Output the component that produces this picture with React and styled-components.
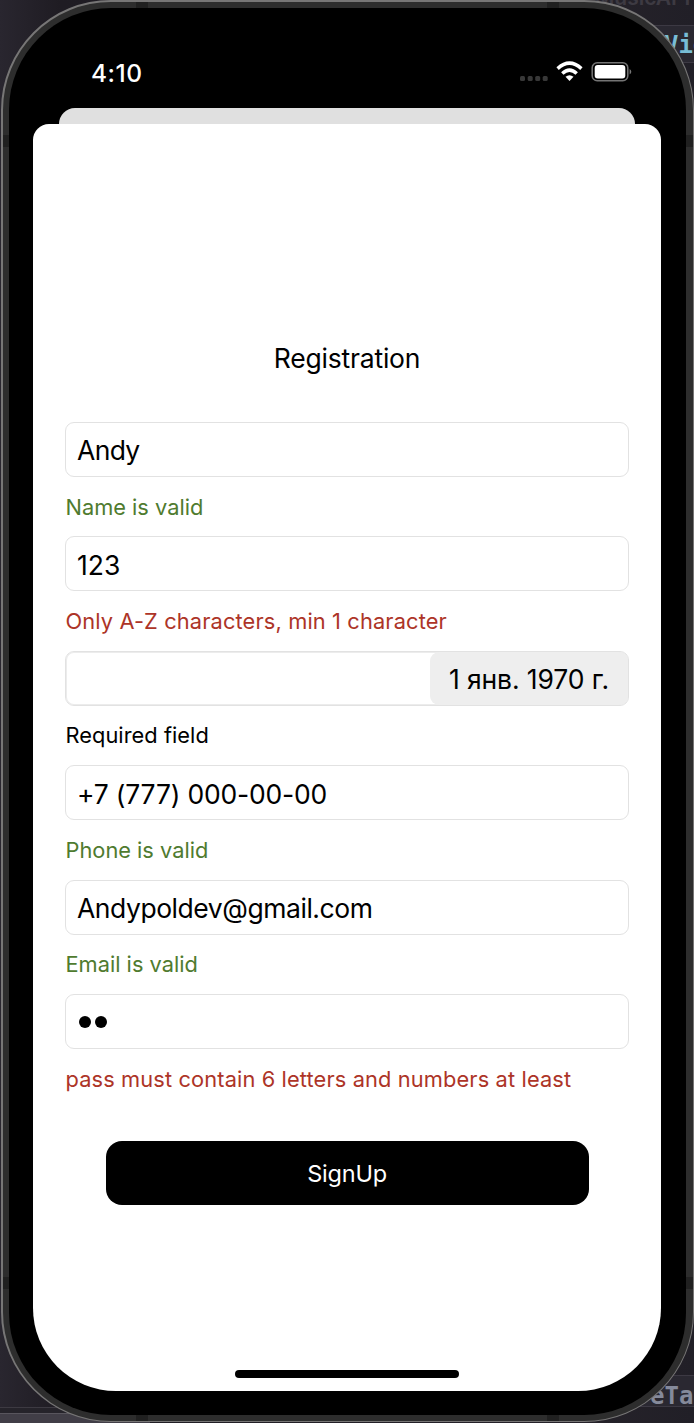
import React from 'react';
import styled, { createGlobalStyle } from 'styled-components';

const GlobalStyle = createGlobalStyle`
  * { box-sizing: border-box; }
  html, body { margin: 0; padding: 0; }
  body {
    background: #25222b;
    font-family: Inter, "Liberation Sans", sans-serif;
    overflow: hidden;
  }
`;

/* The editor and the simulator share one grid cell, simulator on top */
const Desktop = styled.main`
  display: grid;
  width: 694px;
  height: 1423px;
  overflow: hidden;
  > * { grid-area: 1 / 1; }
`;

const Editor = styled.div`
  display: flex;
  flex-direction: column;
  height: 1423px;
  background: linear-gradient(90deg, #29262f 0, #1f1c23 60px, #252229 600px, #211f27 100%);
`;

const EditorTitle = styled.div`
  height: 25px;
  padding-left: 595px;
  overflow: hidden;
  color: #3d3a42;
  font: 600 21px/24px Inter, sans-serif;
  span { display: block; margin-top: -14px; }
`;

const EditorGap = styled.div`
  flex: 1;
`;

const CodeRow = styled.div`
  display: flex;
  align-items: center;
  align-self: flex-end;
  width: 110px;
  height: ${(p) => p.$height}px;
  padding: ${(p) => p.$drop || 0}px 0 0 ${(p) => p.$indent}px;
  border: solid #3c3943;
  border-width: 1px 0;
  background: #2a2831;
  color: ${(p) => p.$color};
  font: bold 24px/28px "DejaVu Sans Mono", monospace;
  white-space: pre;
  overflow: hidden;
`;

const EditorFooter = styled.div`
  width: 150px;
  height: 16px;
  background: linear-gradient(#3d3a42 0 1px, #25232a 1px 6px, #58555d 6px 7px, #413e47 7px);
`;

const band = (place, size) => `linear-gradient(#202020, #202020) ${place} / ${size} no-repeat`;

/* Metal frame: the darker bands are the antenna breaks */
const Phone = styled.section`
  width: 693px;
  height: 1422px;
  margin-left: 1px;
  padding: 6px;
  border: 2px solid #777676;
  border-right-width: 1px;
  border-bottom-width: 1px;
  border-radius: 110px;
  background:
    ${band('133px 0', '12px 6px')},
    ${band('544px 0', '12px 6px')},
    ${band('133px 100%', '12px 6px')},
    ${band('544px 100%', '12px 6px')},
    ${band('0 133px', '6px 12px')},
    ${band('0 1275px', '6px 12px')},
    ${band('100% 133px', '7px 12px')},
    ${band('100% 1275px', '7px 12px')},
    #2d2d2d;
`;

const Bezel = styled.div`
  display: flex;
  flex-direction: column;
  width: 677px;
  height: 100%;
  padding: 0 25px 24px 24px;
  border-radius: 102px;
  background: #000;
`;

const StatusBar = styled.header`
  display: flex;
  flex: none;
  align-items: flex-start;
  justify-content: space-between;
  height: 100px;
  padding: 50px 28px 0 58px;
  color: #fff;
`;

const Clock = styled.time`
  padding-top: 1px;
  font-size: 24.5px;
  font-weight: 500;
  line-height: 28px;
  letter-spacing: 0.5px;
`;

const StatusIcons = styled.svg`
  display: block;
  width: 114px;
  height: 28px;
`;

const BackCard = styled.div`
  flex: none;
  height: 16px;
  margin: 0 26px;
  border-radius: 16px 16px 0 0;
  background: #e0e0e0;
`;

const Sheet = styled.div`
  display: flex;
  flex: 1;
  flex-direction: column;
  min-height: 0;
  padding: 215px 32px 13px;
  border-radius: 16px 16px 83px 83px;
  background: #fff;
`;

const Label = styled.span`
  letter-spacing: ${(p) => p.$track || 0}px;
  white-space: nowrap;
`;

const Title = styled.h1`
  margin: 0;
  height: 83px;
  color: #000;
  font-size: 26.5px;
  font-weight: 400;
  line-height: 38px;
  text-align: center;
`;

const Form = styled.form`
  display: flex;
  flex-direction: column;
  flex: 1;
`;

const Field = styled.div`
  flex: none;
  height: 114.45px;
`;

const Input = styled.div`
  display: flex;
  align-items: center;
  justify-content: space-between;
  height: 55px;
  padding: 1.4px 0 0 ${(p) => (p.$strong ? 0 : 11)}px;
  border: ${(p) => (p.$strong ? '1.5px' : '1px')} solid #e2e2e2;
  border-radius: 9px;
  box-shadow: ${(p) => (p.$strong ? 'inset 0 0 0 1px #ececec' : 'none')};
  color: #000;
  font-size: 26.5px;
  line-height: 36px;
`;

const DateValue = styled.div`
  display: flex;
  align-items: center;
  justify-content: center;
  width: 198px;
  height: 53px;
  margin: -1px 0 0 auto;
  padding-top: 1px;
  border-radius: 9px;
  background: #eee;
`;

const Dots = styled.div`
  display: flex;
  gap: 4px;
  padding-left: 2px;
`;

const Dot = styled.i`
  width: 12px;
  height: 12px;
  border-radius: 50%;
  background: #000;
`;

const tones = { valid: '#4f7b2f', invalid: '#ad3427', plain: '#000' };

const Hint = styled.p`
  margin: 0;
  padding: 15.6px 0 0 0.5px;
  color: ${(p) => tones[p.$tone]};
  font-size: 21.8px;
  line-height: 28px;
`;

const SubmitButton = styled.button`
  flex: none;
  align-self: flex-start;
  width: 483px;
  height: 64px;
  margin: 32.4px 0 0 40.5px;
  padding: 1px 0 0;
  border: 0;
  border-radius: 16px;
  background: #000;
  color: #fff;
  font: 400 23.5px Inter, "Liberation Sans", sans-serif;
`;

const HomeIndicator = styled.div`
  flex: none;
  align-self: center;
  width: 224px;
  height: 8px;
  border-radius: 4px;
  background: #000;
`;

const fields = [
  { value: 'Andy', track: -0.65, hint: 'Name is valid', hintTrack: 0, tone: 'valid' },
  { value: '123', track: 0, hint: 'Only A-Z characters, min 1 character', hintTrack: 0.14, tone: 'invalid' },
  { date: '1 янв. 1970 г.', track: -0.1, hint: 'Required field', hintTrack: 0.05, tone: 'plain' },
  { value: '+7 (777) 000-00-00', track: -0.2, hint: 'Phone is valid', hintTrack: 0, tone: 'valid' },
  { value: 'Andypoldev@gmail.com', track: -0.45, hint: 'Email is valid', hintTrack: 0, tone: 'valid' },
  { secret: 2, hint: 'pass must contain 6 letters and numbers at least', hintTrack: 0.13, tone: 'invalid' },
];

function FieldValue({ value, date, secret, track }) {
  if (secret) {
    return <Dots>{Array.from({ length: secret }, (_, i) => <Dot key={i} />)}</Dots>;
  }
  if (date) {
    return <DateValue><Label $track={track}>{date}</Label></DateValue>;
  }
  return <Label $track={track}>{value}</Label>;
}

function StatusGlyphs() {
  return (
    <StatusIcons viewBox="0 0 114 28">
      <g fill="#383838">
        <rect x="1" y="18" width="5" height="5" rx="1.5" />
        <rect x="8.7" y="18" width="5" height="5" rx="1.5" />
        <rect x="16.2" y="18" width="5" height="5" rx="1.5" />
        <rect x="23.7" y="18" width="5" height="5" rx="1.5" />
      </g>
      <g fill="none" stroke="#fff" strokeWidth="3.5">
        <path d="M38.6 10.6Q50.5-.2 62.4 10.6" />
        <path d="M43.3 15.6Q50.5 8.8 57.7 15.6" />
      </g>
      <path d="M46.5 18.8Q50.5 15.6 54.5 18.8L50.5 22.9Z" fill="#fff" />
      <rect x="73.2" y="4.7" width="35.6" height="18" rx="5" fill="none" stroke="#747474" strokeWidth="1.5" />
      <rect x="75.7" y="7" width="30.6" height="13.4" rx="3" fill="#fff" />
      <path d="M110.6 11q3.4 2.7 0 5.6z" fill="#777" />
    </StatusIcons>
  );
}

export default function App() {
  return (
    <>
      <GlobalStyle />
      <Desktop>
        <Editor>
          <EditorTitle><span>MusicAPI</span></EditorTitle>
          <CodeRow $height={38} $indent={80} $drop={2} $color="#78bdd6">Vie</CodeRow>
          <EditorGap />
          <CodeRow $height={32} $indent={66} $drop={10} $color="#858a9b">eTab</CodeRow>
          <EditorFooter />
        </Editor>
        <Phone>
          <Bezel>
            <StatusBar>
              <Clock>4:10</Clock>
              <StatusGlyphs />
            </StatusBar>
            <BackCard />
            <Sheet>
              <Title><Label $track={-0.2}>Registration</Label></Title>
              <Form>
                {fields.map((f) => (
                  <Field key={f.hint}>
                    <Input $strong={Boolean(f.date)}><FieldValue {...f} /></Input>
                    <Hint $tone={f.tone}><Label $track={f.hintTrack}>{f.hint}</Label></Hint>
                  </Field>
                ))}
                <SubmitButton type="button"><Label $track={-0.2}>SignUp</Label></SubmitButton>
              </Form>
              <HomeIndicator />
            </Sheet>
          </Bezel>
        </Phone>
      </Desktop>
    </>
  );
}
